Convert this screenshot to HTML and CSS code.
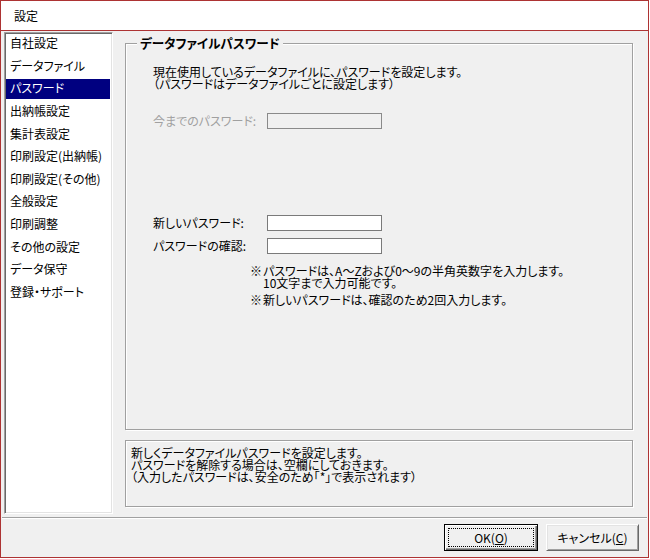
FILE: index.html
```html
<!DOCTYPE html>
<html lang="ja">
<head>
<meta charset="utf-8">
<title>設定</title>
<link rel="stylesheet" href="styles.css">
</head>
<body>
<div class="window">
  <div class="titlebar">設定</div>
  <div class="client">
    <div class="main">
      <ul class="nav">
        <li><span>自社設定</span></li>
        <li><span>データファイル</span></li>
        <li class="selected"><span>パスワード</span></li>
        <li><span>出納帳設定</span></li>
        <li><span>集計表設定</span></li>
        <li><span>印刷設定(出納帳)</span></li>
        <li><span>印刷設定(その他)</span></li>
        <li><span>全般設定</span></li>
        <li><span>印刷調整</span></li>
        <li><span>その他の設定</span></li>
        <li><span>データ保守</span></li>
        <li><span>登録・サポート</span></li>
      </ul>
      <div class="content">
        <fieldset class="group">
          <legend>データファイルパスワード</legend>
          <div class="group-body">
            <div class="intro">
              <div class="line">現在使用しているデータファイルに、パスワードを設定します。</div>
              <div class="line">（パスワードはデータファイルごとに設定します）</div>
            </div>
            <div class="row row-old">
              <span class="label disabled">今までのパスワード:</span>
              <span class="field is-disabled"></span>
            </div>
            <div class="row row-new">
              <span class="label">新しいパスワード:</span>
              <span class="field"></span>
            </div>
            <div class="row row-confirm">
              <span class="label">パスワードの確認:</span>
              <span class="field"></span>
            </div>
            <div class="notes">
              <div class="note"><span class="mark">※</span><div class="note-text"><div class="line">パスワードは、A〜Zおよび0〜9の半角英数字を入力します。</div><div class="line">10文字まで入力可能です。</div></div></div>
              <div class="note note-second"><span class="mark">※</span><div class="note-text"><div class="line">新しいパスワードは、確認のため2回入力します。</div></div></div>
            </div>
          </div>
        </fieldset>
        <div class="desc">
          <div class="line">新しくデータファイルパスワードを設定します。</div>
          <div class="line">パスワードを解除する場合は、空欄にしておきます。</div>
          <div class="line">（入力したパスワードは、安全のため「*」で表示されます）</div>
        </div>
      </div>
    </div>
    <div class="separator"></div>
    <div class="buttons">
      <button class="btn btn-default"><span class="focus">OK(<u>O</u>)</span></button>
      <button class="btn">キャンセル(<u>C</u>)</button>
    </div>
  </div>
</div>
</body>
</html>
```

FILE: styles.css
```css
* { box-sizing: border-box; }

html, body {
  margin: 0;
  padding: 0;
  background: #ffffff;
}

body {
  font-family: "Noto Sans CJK JP", "Noto Sans", sans-serif;
  font-size: 12px;
  line-height: 12px;
  color: #000;
  font-feature-settings: "palt";
}

.window {
  width: 649px;
  height: 558px;
  border: 1px solid #ad3333;
  display: flex;
  flex-direction: column;
  background: #f0f0f0;
}

.titlebar {
  height: 30px;
  flex: none;
  background: #fff;
  border-bottom: 1px solid #ad3333;
  padding-left: 13px;
  display: flex;
  align-items: center;
  font-size: 12px;
}

.client {
  flex: 1;
  display: flex;
  flex-direction: column;
}

.main {
  display: flex;
  align-items: flex-start;
  padding: 1px 0 0 3px;
}

.nav {
  list-style: none;
  margin: 0;
  width: 109px;
  height: 482px;
  background: #fff;
  border-style: solid;
  border-width: 1px;
  border-color: #a0a0a0 #ffffff #ffffff #a0a0a0;
  box-shadow: inset 1px 1px 0 #696969, inset -1px -1px 0 #e3e3e3;
  padding: 1px 2px 0 1px;
}

.nav li {
  height: 22.65px;
}

.nav li span {
  display: block;
  height: 20px;
  line-height: 17px;
  padding-left: 4px;
  white-space: nowrap;
}

.nav li.selected span {
  background: #000080;
  color: #fff;
}

.content {
  margin: 4px 0 0 12px;
  width: 508px;
  height: 471px;
  display: flex;
  flex-direction: column;
}

.group {
  margin: 0;
  padding: 0;
  min-width: 0;
  flex: 1;
  border: 1px solid #a0a0a0;
  box-shadow: inset 1px 1px 0 #fff, 1px 1px 0 #fff;
}

.group legend {
  margin-left: 11px;
  padding: 0 3px;
  font-weight: bold;
  font-size: 12.6px;
  line-height: 14px;
  background: #f0f0f0;
}

.group-body {
  padding-left: 27px;
}

.line {
  height: 12px;
  white-space: nowrap;
}

.intro {
  margin: 16px 0 0;
}

.row {
  display: grid;
  grid-template-columns: 114px 115px;
  align-items: center;
}

.row-old { margin-top: 23px; }
.row-new { margin-top: 86px; }
.row-confirm { margin-top: 7px; }

.label.disabled { color: #a0a0a0; }

.field {
  display: block;
  height: 16px;
  border: 1px solid #7a7a7a;
  background: #fff;
}

.field.is-disabled {
  background: #f0f0f0;
  border-color: #8a8a8a;
}

.notes {
  margin: 11px 0 0 97px;
}

.note {
  display: flex;
}

.note .mark {
  width: 13px;
  flex: none;
}

.note-second {
  margin-top: 5px;
}

.desc {
  margin-top: 10px;
  height: 67px;
  flex: none;
  border: 1px solid #a0a0a0;
  box-shadow: inset 1px 1px 0 #fff, 1px 1px 0 #fff;
  padding: 6px 0 0 5px;
}

.separator {
  margin: 3px 1px 0;
  height: 2px;
  border-top: 1px solid #a0a0a0;
  border-bottom: 1px solid #fff;
}

.buttons {
  display: flex;
  justify-content: flex-end;
  gap: 8px;
  padding: 5px 9px 0 0;
}

.btn {
  width: 93px;
  height: 27px;
  margin: 0;
  padding: 0;
  font: inherit;
  font-size: 12px;
  color: #000;
  background: #f0f0f0;
  border: 1px solid;
  border-color: #fff #696969 #696969 #fff;
  box-shadow: inset 1px 1px 0 #e3e3e3, inset -1px -1px 0 #a0a0a0;
  display: flex;
  align-items: center;
  justify-content: center;
}

.btn-default {
  width: 94px;
  border-color: #000;
  box-shadow: inset 1px 1px 0 #fff, inset -1px -1px 0 #696969, inset -2px -2px 0 #a0a0a0;
  padding: 3px;
  align-items: stretch;
}

.btn-default .focus {
  flex: 1;
  border: 1px dotted #000;
  display: flex;
  align-items: center;
  justify-content: center;
}

u { text-decoration: underline; text-underline-offset: 1px; }
```
